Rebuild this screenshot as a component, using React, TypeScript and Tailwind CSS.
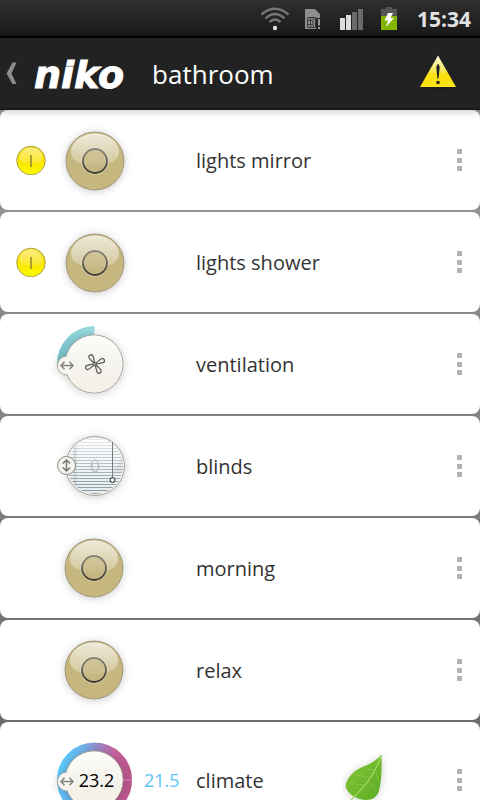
import type { ReactNode } from 'react'

type Kind = 'light' | 'fan' | 'blinds' | 'scene' | 'climate'

interface Device {
  name: string
  kind: Kind
  on?: boolean
  target?: string
  current?: string
}

const devices: Device[] = [
  { name: 'lights mirror', kind: 'light', on: true },
  { name: 'lights shower', kind: 'light', on: true },
  { name: 'ventilation', kind: 'fan' },
  { name: 'blinds', kind: 'blinds' },
  { name: 'morning', kind: 'scene' },
  { name: 'relax', kind: 'scene' },
  { name: 'climate', kind: 'climate', current: '23.2', target: '21.5' },
]

// gradients and filters shared by all dials
function Defs() {
  return (
    <svg className="absolute h-0 w-0" aria-hidden="true">
      <defs>
        <linearGradient id="gloss" x1="0" y1="0" x2="0" y2="1">
          <stop offset="0" stopColor="#fff" stopOpacity="0.85" />
          <stop offset="1" stopColor="#fff" stopOpacity="0.25" />
        </linearGradient>
        <linearGradient id="ring" x1="0" y1="0" x2="0" y2="1">
          <stop offset="0" stopColor="#8a8778" />
          <stop offset="1" stopColor="#3c3a33" />
        </linearGradient>
        <linearGradient id="cream" x1="0" y1="0" x2="0" y2="1">
          <stop offset="0" stopColor="#fdfdfb" />
          <stop offset="0.5" stopColor="#f5f3ed" />
          <stop offset="1" stopColor="#f2efe6" />
        </linearGradient>
        <linearGradient id="lamp" x1="0" y1="0" x2="0" y2="1">
          <stop offset="0" stopColor="#f6d800" />
          <stop offset="0.5" stopColor="#fbe400" />
          <stop offset="1" stopColor="#fdfd00" />
        </linearGradient>
        <linearGradient id="air" x1="0" y1="1" x2="1" y2="0">
          <stop offset="0" stopColor="#74bfca" />
          <stop offset="1" stopColor="#9adbe1" />
        </linearGradient>
        <linearGradient id="heat" x1="0" y1="0.3" x2="1" y2="0.5">
          <stop offset="0" stopColor="#5cc8fb" />
          <stop offset="0.25" stopColor="#6cb4ec" />
          <stop offset="0.55" stopColor="#a97ab8" />
          <stop offset="0.75" stopColor="#c65f97" />
          <stop offset="1" stopColor="#b9568c" />
        </linearGradient>
        <linearGradient id="slats" x1="0" y1="0" x2="0" y2="1">
          <stop offset="0" stopColor="#fff" />
          <stop offset="1" stopColor="#e3e9eb" />
        </linearGradient>
        <linearGradient id="warn" x1="0" y1="0" x2="0" y2="1">
          <stop offset="0" stopColor="#fffbe0" />
          <stop offset="0.5" stopColor="#f6e552" />
          <stop offset="0.6" stopColor="#fbe010" />
          <stop offset="1" stopColor="#fde412" />
        </linearGradient>
        <linearGradient id="leaf" x1="0" y1="0" x2="1" y2="1">
          <stop offset="0" stopColor="#86c83a" />
          <stop offset="1" stopColor="#5cab22" />
        </linearGradient>
        <filter id="shade" x="-30%" y="-30%" width="160%" height="160%">
          <feDropShadow dx="0" dy="1" stdDeviation="4" floodColor="#000" floodOpacity="0.2" />
        </filter>
        <clipPath id="window">
          <circle cx="46" cy="46" r="28" />
        </clipPath>
      </defs>
    </svg>
  )
}

function Dial({ children }: { children: ReactNode }) {
  return (
    <svg viewBox="0 0 92 92" className="h-[92px] w-[92px]" aria-hidden="true">
      {children}
    </svg>
  )
}

function GoldButton({ cx, cy }: { cx: number; cy: number }) {
  return (
    <Dial>
      <g transform={`translate(${cx} ${cy})`}>
        <circle r="29" fill="#c6b77f" stroke="#9d967c" filter="url(#shade)" />
        <path d="M-24 -9C-24 -19 -13 -27.500 0 -27.500S24 -19 24 -9C24 0 15 4 0 4S-24 0 -24 -9Z" fill="url(#gloss)" opacity="0.85" />
        <circle r="12" fill="#c6b884" fillOpacity="0.6" />
        <circle r="13.5" fill="none" stroke="#fff" strokeOpacity="0.3" />
        <circle r="12" fill="none" stroke="url(#ring)" strokeWidth="1.8" />
      </g>
    </Dial>
  )
}

function KnobbedDisc() {
  return (
    <g>
      <g filter="url(#shade)">
        <circle cx="45" cy="46" r="29" fill="#f5f3ed" stroke="#9e9b93" />
        <circle cx="18" cy="47.5" r="9.5" fill="#f5f3ed" stroke="#9e9b93" />
      </g>
      <circle cx="45" cy="46" r="28.5" fill="url(#cream)" />
      <circle cx="18" cy="47.5" r="9" fill="#f6f4ee" />
      <path
        d="M12.5 47.5H23.5M15.5 43.8 12 47.5l3.5 3.7M20.5 43.8l3.5 3.7-3.5 3.7"
        fill="none"
        stroke="#85837e"
        strokeWidth="1.5"
      />
    </g>
  )
}

function FanDial() {
  return (
    <Dial>
      <path d="M8 46A37.5 37.5 0 0 1 45.5 8V20H45A27 27 0 0 0 18 46Z" fill="url(#air)" />
      <KnobbedDisc />
      <g fill="none" stroke="#5f5d58" strokeWidth="1.3">
        {[-30, 65, 150, 245].map((angle) => (
          <path
            key={angle}
            transform={`translate(46 46) rotate(${angle})`}
            d="M-0.6 -1.5C-0.9 -4 -2.2 -6 -2.1 -8.4C-1.900 -10.800 1.900 -10.800 2.100 -8.400C2.200 -6 0.900 -4 0.600 -1.500"
          />
        ))}
        <circle cx="46" cy="46" r="1.3" />
      </g>
    </Dial>
  )
}

function BlindsDial() {
  return (
    <Dial>
      <circle cx="46" cy="46" r="29.5" fill="#f5f2ea" stroke="#a5a29b" filter="url(#shade)" />
      <g clipPath="url(#window)">
        <rect x="16" y="16" width="61" height="61" fill="url(#slats)" />
        {Array.from({ length: 19 }, (_, i) => (
          <rect key={i} x="16" y={19 + i * 3} width="61" height="1" fill="#8598a2" opacity={0.2 + i * 0.045} />
        ))}
        <path d="M26 18V74" stroke="#9aa3a6" strokeWidth="3" opacity="0.3" />
        <path d="M77 30 64 52h13Z" fill="#8c999e" opacity="0.15" />
      </g>
      <ellipse cx="46" cy="46" rx="3.5" ry="6" fill="none" stroke="#adb3b5" strokeWidth="1.2" />
      <path d="M63.500 22V58" stroke="#77797a" />
      <circle cx="63.5" cy="60" r="2.3" fill="#fff" stroke="#5d5f60" strokeWidth="1.3" />
      <circle cx="17.5" cy="45.5" r="9" fill="#f6f4ee" stroke="#8d8a83" />
      <path
        d="M17.5 40V51M13.800 43.500 17.500 40l3.700 3.500M13.800 47.500l3.700 3.500 3.700-3.500"
        fill="none"
        stroke="#76746f"
        strokeWidth="1.5"
      />
    </Dial>
  )
}

function ClimateDial({ value }: { value?: string }) {
  return (
    <Dial>
      <circle cx="45.5" cy="46" r="33" fill="none" stroke="url(#heat)" strokeWidth="9" />
      <path d="M74 46h9" stroke="#d68bb4" />
      <KnobbedDisc />
      <text x="47.5" y="53" textAnchor="middle" className="fill-black text-[18px]">
        {value}
      </text>
    </Dial>
  )
}

function DeviceDial({ device }: { device: Device }) {
  switch (device.kind) {
    case 'light':
      return <GoldButton cx={46} cy={47} />
    case 'scene':
      return <GoldButton cx={45} cy={46} />
    case 'fan':
      return <FanDial />
    case 'blinds':
      return <BlindsDial />
    default:
      return <ClimateDial value={device.current} />
  }
}

function Lamp() {
  return (
    <svg viewBox="0 0 30 30" className="h-[30px] w-[30px]" role="img" aria-label="on">
      <circle cx="15" cy="15.5" r="14.3" fill="url(#lamp)" stroke="#a39a4a" strokeWidth="0.9" />
      <path d="M3.500 13C3.500 7 8 2.500 15 2.500S26.500 7 26.500 13C26.500 17 22 18.500 15 18.500S3.500 17 3.500 13Z" fill="url(#gloss)" opacity="0.6" />
      <path d="M15 10V22" stroke="#8f8730" strokeWidth="1.5" />
    </svg>
  )
}

function Leaf() {
  return (
    <svg viewBox="0 0 50 60" className="h-[60px] w-[50px]" aria-hidden="true">
      <path
        d="M39.500 4.500C35 9.500 30 13 24 15.500C17 18 12 21 8 26C3.500 32 3 36 4.500 39C8 45 14 48.500 20 49.500C27 51 34 49 36.500 42C39.500 33 40 20 39.500 4.500Z"
        fill="url(#leaf)"
        filter="url(#shade)"
      />
      <path d="M39 6C35 20 26 34 8 51" fill="none" stroke="#a8d86a" strokeWidth="1.2" />
      <path d="M34 19 24 20M29 28 15 25M23 36 9 33M34 22 37 31M27 32 34 41" fill="none" stroke="#9ad05a" strokeWidth="0.5" />
    </svg>
  )
}

function DeviceRow({ device }: { device: Device }) {
  const climate = device.kind === 'climate'
  return (
    <li
      className={`grid shrink-0 grid-cols-[30px_92px_49px_1fr_50px_auto] items-center gap-x-[3px] rounded-lg bg-white pl-4 ${
        climate ? 'h-[116px]' : 'h-[100px]'
      }`}
    >
      <div>{device.on && <Lamp />}</div>
      <button type="button" aria-label={`Toggle ${device.name}`}>
        <DeviceDial device={device} />
      </button>
      <span className="text-[18px] text-[#5cc4f5]">{device.target}</span>
      <span className="pt-px text-[20px] text-[#333]">{device.name}</span>
      <div>{climate && <Leaf />}</div>
      <button
        type="button"
        aria-label={`${device.name} options`}
        className="ml-[57px] mr-3 flex h-8 w-4 flex-col items-start justify-between p-[5px]"
      >
        <span className="h-[5px] w-[5px] bg-[#b3b3b3]" />
        <span className="h-[5px] w-[5px] bg-[#b3b3b3]" />
        <span className="h-[5px] w-[5px] bg-[#b3b3b3]" />
      </button>
    </li>
  )
}

function StatusBar() {
  return (
    <div className="flex h-[38px] shrink-0 items-center justify-end border-b-2 border-black bg-linear-to-b from-[#2f2f2f] to-[#191919] pr-[9px]">
      <svg viewBox="0 0 140 36" className="h-9 w-[140px]" aria-hidden="true">
        <g fill="none" stroke="#777" strokeWidth="2.4">
          <path d="M0.500 14.500Q14 3 27.500 14.500" />
          <path d="M4.500 18.500Q14 9.500 23.500 18.500" />
          <path d="M8.500 22Q14 17 19.500 22" />
        </g>
        <circle cx="14" cy="28" r="2.2" fill="#ddd" />
        <path d="M44 9H54L59 14V18H55V29H44Z" fill="#8d8d8d" />
        <path d="M46.500 17.500H54.500V27.500H46.500ZM49.500 20.500H52V24.500H49.500ZM46.500 20.500H49M46.500 24.500H49M49.500 17.500V20M52.500 17.500V20M49.500 25V27.500M52.500 25V27.500" fill="none" stroke="#3a3a3a" />
        <path d="M58 19V25.500M58 27V29" stroke="#999" strokeWidth="2" />
        <path d="M79 18H84V30H79ZM85 15H90V30H85Z" fill="#ddd" />
        <path d="M91 12H96V30H91ZM97 9H102V30H97Z" fill="#6b6b6b" />
        <path d="M120 9H124.500V7H131V9H136V30H120Z" fill="#555" />
        <path d="M120 16H136V30H120Z" fill="#82b400" />
        <path d="M127 13H132L129.500 18H133L125 27L127 20.500H123.500Z" fill="#fff" />
      </svg>
      <time className="ml-4 pt-[2px] text-[21px] font-bold leading-9 text-[#e2e2e2]">15:34</time>
    </div>
  )
}

function Header() {
  return (
    <header className="relative z-10 flex h-[72px] shrink-0 items-center border-b-2 border-[#1a1a1a] bg-[#222] pl-[6px] pr-5 shadow-[0_2px_8px_rgba(0,0,0,0.2)]">
      <button type="button" aria-label="Back" className="flex items-center">
        <svg viewBox="0 0 12 24" className="h-6 w-3" aria-hidden="true">
          <path d="M6.500 1.500H10.500L5.500 12.500 10.500 23H6.500L0.500 12.500Z" fill="#8c8c8c" />
        </svg>
        <span className="ml-4 pt-[3px] font-['DejaVu_Sans',sans-serif] text-[38px] font-bold italic leading-none text-white [-webkit-text-stroke:1px_white]">
          niko
        </span>
      </button>
      <h1 className="ml-7 flex-1 pt-[2px] text-[26px] text-white">bathroom</h1>
      <button type="button" aria-label="Warnings">
        <svg viewBox="0 0 44 44" className="h-11 w-11" aria-hidden="true">
          <path d="M22 4.500 40 36H4Z" fill="url(#warn)" filter="url(#shade)" />
          <path d="M20.300 16Q22 10 23.700 16L22.600 27.500H21.400Z" fill="#222" />
          <circle cx="22" cy="31.500" r="1.8" fill="#222" />
        </svg>
      </button>
    </header>
  )
}

export default function App() {
  return (
    <div className="flex h-screen flex-col overflow-hidden bg-linear-to-b from-[#a3a3a3] to-[#666] font-['Open_Sans','Noto_Sans',sans-serif]">
      <Defs />
      <StatusBar />
      <Header />
      <ul className="flex min-h-0 flex-1 flex-col gap-[2px] overflow-y-auto [scrollbar-width:none]">
        {devices.map((device) => (
          <DeviceRow key={device.name} device={device} />
        ))}
      </ul>
    </div>
  )
}
